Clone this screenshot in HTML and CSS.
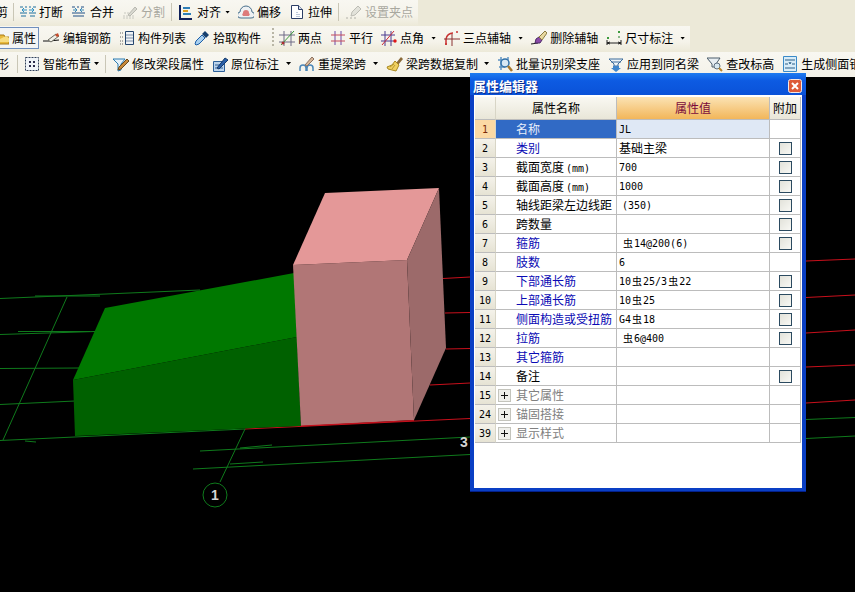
FILE: index.html
```html
<!DOCTYPE html>
<html lang="zh">
<head>
<meta charset="utf-8">
<title>属性编辑器</title>
<link rel="stylesheet" href="styles.css">
</head>
<body>
<div class="app">
<header class="toolbars">
  <div class="bar bar1">
    <span class="lead lead1">剪</span><i class="sep"></i>
    <div class="tool"><svg width="16" height="16" viewBox="0 0 16 16"><path d="M0 3h3M5 3h2M9 3h2M13 3h3M0 9h7M9 9h7M1 12h5M10 12h5" stroke="#1d6f9e" fill="none"/><path d="M7 6H2l2-2M2 6l2 2M9 6h5l-2-2M14 6l-2 2" stroke="#2a8fc4" fill="none"/></svg><span>打断</span></div>
    <div class="tool"><svg width="16" height="16" viewBox="0 0 16 16"><path d="M1 3h3M6 3h2M10 3h3M1 9h13M2 12h11" stroke="#1f4f86" fill="none"/><path d="M2 6h4l-2-2M6 6l-2 2M13 6H9l2-2M9 6l2 2" stroke="#3a8ab8" fill="none"/></svg><span>合并</span></div>
    <div class="tool off"><svg width="16" height="16" viewBox="0 0 16 16"><path d="M1 12h12M1 14h12M2 9h8" stroke="#c8c8c0" stroke-dasharray="2 1" fill="none"/><path d="M6 11l7-8 2 2-7 7z" fill="#d8d8d0" stroke="#b8b8b0"/></svg><span>分割</span></div>
    <i class="sep"></i>
    <div class="tool"><svg width="16" height="16" viewBox="0 0 16 16"><path d="M2 1v14h12" stroke="#10205a" stroke-width="2" fill="none"/><path d="M5 4h7M5 10h8" stroke="#2f7fb8" stroke-width="2" fill="none"/><path d="M5 7h5" stroke="#e0a020" stroke-width="2"/></svg><span>对齐</span><b class="arrow near"></b></div>
    <div class="tool"><svg width="16" height="16" viewBox="0 0 16 16"><path d="M3 14a3 3 0 0 1-1-6 6 6 0 0 1 12 0 3 3 0 0 1-1 6z" fill="#eef1f3" stroke="#48708c"/><path d="M5 12a2 2 0 0 1 0-3 3 3 0 0 1 6 0 2 2 0 0 1 0 3z" fill="#dd7a7a"/></svg><span>偏移</span></div>
    <div class="tool"><svg width="16" height="16" viewBox="0 0 16 16"><path d="M2.500 1.500h7l4 4v9h-11z" fill="#fff" stroke="#2c3e66"/><path d="M9.500 1.500v4h4" fill="#d8e0ee" stroke="#2c3e66"/><path d="M8 8v5M10 10v3" stroke="#7c93b4" stroke-dasharray="1 1"/></svg><span>拉伸</span></div>
    <i class="sep"></i>
    <div class="tool off"><svg width="17" height="16" viewBox="0 0 17 16"><path d="M1 14h2M5 14h2M9 14h2" stroke="#b0b0a8"/><path d="M6 12l1-4 6-6 3 3-6 6z" fill="#e2e2da" stroke="#bcbcb4"/></svg><span>设置夹点</span></div>
  </div>

  <div class="bar bar2">
    <div class="tool active"><svg width="9" height="16" viewBox="0 0 9 16"><path d="M-6 5h10l1 2h4v7H-6z" fill="#e8b93c" stroke="#a87a18"/><path d="M0 9l6-3 3 2v4H0z" fill="#f6dc82"/></svg><span>属性</span></div>
    <div class="tool pull"><svg width="17" height="16" viewBox="0 0 17 16"><path d="M0 11h6l10-1" stroke="#111" fill="none"/><path d="M5 10l8-6 3 2-8 6z" fill="#f0f0e8" stroke="#6a6a60"/><path d="M12 5l3-2 1 3-2 1z" fill="#c84a2a"/></svg><span>编辑钢筋</span></div>
    <div class="tool"><svg width="16" height="16" viewBox="0 0 16 16"><path d="M1 3h3M1 7h3M1 11h3M1 14h3" stroke="#666" stroke-dasharray="1 1"/><path d="M6.500 1.500h8v13h-8z" fill="#eef2f6" stroke="#24456e"/><path d="M7 5h7M7 8h7M7 11h7" stroke="#7b8da6"/></svg><span>构件列表</span></div>
    <div class="tool"><svg width="16" height="16" viewBox="0 0 16 16"><path d="M2 15l-1-1 1-3 6-6 3 3-6 6z" fill="#a9d0ef" stroke="#1d5fa8"/><path d="M8 4l3-3 4 4-3 3z" fill="#16406f"/></svg><span>拾取构件</span></div>
    <i class="grip"></i>
    <div class="tool"><svg width="16" height="16" viewBox="0 0 16 16"><path d="M5 1v15M12 1v15M0 5h16M0 12h16" stroke="#6e6a86" fill="none"/><path d="M2 15L15 1" stroke="#3d9a3d" fill="none"/><circle cx="4" cy="13" r="1.500" fill="#a83030"/></svg><span>两点</span></div>
    <div class="tool"><svg width="16" height="16" viewBox="0 0 16 16"><path d="M5 1v14M11 1v14" stroke="#6c4aa8" fill="none"/><path d="M1 5h14M1 11h14" stroke="#c64a5a" fill="none"/></svg><span>平行</span></div>
    <div class="tool"><svg width="16" height="16" viewBox="0 0 16 16"><path d="M4 1v15M10 1v15M0 5h14M0 11h14" stroke="#4a3a90" fill="none"/><path d="M1 15L13 1" stroke="#cc2a3a" fill="none"/><circle cx="14" cy="11" r="1.700" fill="#e01818"/></svg><span>点角</span><b class="arrow"></b></div>
    <div class="tool"><svg width="16" height="16" viewBox="0 0 16 16"><path d="M2 15V9a7 7 0 0 1 7-6" stroke="#c83030" stroke-width="1.500" fill="none"/><path d="M0 9h16M8 4v12" stroke="#8a3030" fill="none"/><circle cx="2" cy="14" r="1" fill="#c83030"/><circle cx="13" cy="2" r="1" fill="#c83030"/></svg><span>三点辅轴</span><b class="arrow"></b></div>
    <div class="tool"><svg width="16" height="16" viewBox="0 0 16 16"><path d="M0 14l7-1" stroke="#222"/><path d="M4 13l1-4 3-2 3 3-2 3z" fill="#8a4aa8" stroke="#4d2a66"/><path d="M8 7l6-6 2 2-5 7z" fill="#e8d8a0" stroke="#8a7a40"/></svg><span>删除辅轴</span></div>
    <div class="tool"><svg width="16" height="16" viewBox="0 0 16 16"><path d="M1 10v5M15 10v5M1 13h14M1 13l3-1M1 13l3 1M15 13l-3-1M15 13l-3 1" stroke="#222" fill="none"/><rect x="1" y="7" width="2" height="2" fill="#3d9a3d"/><rect x="12" y="1" width="2" height="2" fill="#3d9a3d"/><rect x="12" y="6" width="2" height="2" fill="#8ab88a"/></svg><span>尺寸标注</span><b class="arrow"></b></div>
  </div>

  <div class="bar bar3">
    <span class="lead lead3">形</span><i class="sep"></i>
    <div class="tool"><svg width="16" height="16" viewBox="0 0 16 16"><path d="M1.500 1.500h13v13h-13z" fill="#f0f4f8" stroke="#30405a" stroke-dasharray="2 1"/><path d="M5 5h2v2H5zM9 5h2v2H9zM5 9h2v2H5zM9 9h2v2H9z" fill="#2a2a4a"/></svg><span>智能布置</span><b class="arrow near"></b></div>
    <i class="sep"></i>
    <div class="tool"><svg width="17" height="16" viewBox="0 0 17 16"><path d="M1 3h12L9 8v6l-3 1V8z" fill="#e6f2fa" stroke="#2a7ab0"/><path d="M7 11l8-8 2 2-8 8-3 1z" fill="#c88a3a" stroke="#6a4a20"/></svg><span>修改梁段属性</span></div>
    <div class="tool"><svg width="16" height="16" viewBox="0 0 16 16"><path d="M1.500 5.500h11v10h-11z" fill="#bcd4ec" stroke="#2c5f98"/><path d="M3 9h5M3 12h8" stroke="#2c5f98"/><path d="M5 12l8-10 3 2-9 9z" fill="#2a5fa8" stroke="#163a6a"/></svg><span>原位标注</span><b class="arrow"></b></div>
    <div class="tool"><svg width="16" height="16" viewBox="0 0 16 16"><path d="M1 15v-3a3 3 0 0 1 6 0v3M8 15v-3a3 3 0 0 1 6 0v3" stroke="#4a86b8" stroke-width="1.500" fill="none"/><path d="M6 9l7-8 2 2-7 7z" fill="#d8b89a" stroke="#8a7060"/></svg><span>重提梁跨</span><b class="arrow"></b></div>
    <div class="tool"><svg width="17" height="16" viewBox="0 0 17 16"><path d="M10 7l5-6 2 2-5 6z" fill="#8a6a3a"/><path d="M9 5l4 4-3 6-8-2-1-2 5-2z" fill="#f0d060" stroke="#a88820"/><path d="M4 11l4-3M6 13l3-4" stroke="#b89a30"/></svg><span>梁跨数据复制</span><b class="arrow a6"></b></div>
    <div class="tool"><svg width="16" height="16" viewBox="0 0 16 16"><path d="M1 4h7M2 11h6M4 1v13M11 1v6" stroke="#5d93c4" stroke-width="1.500" fill="none"/><circle cx="8" cy="7" r="4" fill="#d8e8f4" stroke="#2f6fa8" stroke-width="1.500"/><path d="M11 10l4 5" stroke="#a8782c" stroke-width="2.500"/></svg><span>批量识别梁支座</span></div>
    <div class="tool"><svg width="16" height="16" viewBox="0 0 16 16"><path d="M1 3h14l-5 5v2H6V8z" fill="#eef4f8" stroke="#3a6a9a"/><path d="M3 6h10" stroke="#3a6a9a"/><path d="M5 10h6v2h2l-5 4-5-4h2z" fill="#3f86cc"/></svg><span>应用到同名梁</span></div>
    <div class="tool"><svg width="16" height="16" viewBox="0 0 16 16"><path d="M0 2h13l-4 6v3H5V8z" fill="#e8eef2" stroke="#4a5c6a"/><circle cx="10" cy="10" r="3" fill="#d8e8f0" stroke="#607080"/><path d="M12 12l3 3" stroke="#b8862c" stroke-width="2"/></svg><span>查改标高</span></div>
    <div class="tool"><svg width="16" height="16" viewBox="0 0 16 16"><path d="M1.500 .5h13v15h-13z" fill="#d8ecf8" stroke="#3a8ac8"/><path d="M3 4h10M3 12h10" stroke="#2a5f88"/><path d="M3 8h3M10 8h3M7 6l1 2 1-2" stroke="#2a5f88" fill="none"/></svg><span>生成侧面钢筋</span></div>
  </div>
</header>

<main class="canvas">
  <svg class="scene" width="855" height="515" viewBox="0 77 855 515">
    <g class="grid-green">
      <path d="M0 298.500L200 290M35 296H100M0 334.500L95 331.500M18 331.500H90M0 368.500L80 368M0 404.500L75 401M0 440.500L245 429M3 440L67 297M25 441l11 1"/>
      <path d="M200 451L470 437M240 448l32-3M806 419.500L855 417.500M193 469L470 454.500M230 464l33-2M806 438.500L855 436"/>
      <path d="M245 429L220 482"/>
      <circle cx="215" cy="495" r="12"/>
    </g>
    <g class="grid-red">
      <path d="M443 278.500L470 277M806 261L855 259M445 313L470 312.500M806 297.500L855 295M446 349L470 348.500M806 333L855 330M430 385L470 383M806 367L855 365M245 429L470 418.500M806 403L855 400"/>
    </g>
    <path class="beam-top" d="M73 380L105 308L294 273L297 337Z"/>
    <path class="beam-front" d="M73 380L297 337L301 426L75 436Z"/>
    <path class="col-front" d="M293 265L407 260L414 420L301 426Z"/>
    <path class="col-top" d="M293 265L325 193L439 188L407 260Z"/>
    <path class="col-side" d="M407 260L439 188L446 348L414 420Z"/>
    <path class="grid-red" d="M301 426L414 420.500"/>
    <text class="label" x="215" y="500">1</text>
    <text class="label" x="464" y="447">3</text>
  </svg>

  <section class="dialog">
    <div class="dialog-title"><span>属性编辑器</span>
      <svg class="close" width="14" height="14" viewBox="0 0 14 14"><rect x=".5" y=".5" width="13" height="13" rx="2" fill="#dd5a38" stroke="#f4e8e4"/><path d="M4 4l6 6M10 4l-6 6" stroke="#fff" stroke-width="2"/></svg>
    </div>
    <div class="client">
      <div class="row head"><div class="num"></div><div class="name">属性名称</div><div class="val">属性值</div><div class="add">附加</div></div>
      <div class="row sel"><div class="num">1</div><div class="name">名称</div><div class="val">JL</div><div class="add"></div></div>
      <div class="row"><div class="num">2</div><div class="name pub">类别</div><div class="val cjk">基础主梁</div><div class="add"><i class="chk"></i></div></div>
      <div class="row"><div class="num">3</div><div class="name">截面宽度<span class="unit">(mm)</span></div><div class="val">700</div><div class="add"><i class="chk"></i></div></div>
      <div class="row"><div class="num">4</div><div class="name">截面高度<span class="unit">(mm)</span></div><div class="val">1000</div><div class="add"><i class="chk"></i></div></div>
      <div class="row"><div class="num">5</div><div class="name">轴线距梁左边线距</div><div class="val ind">(350)</div><div class="add"><i class="chk"></i></div></div>
      <div class="row"><div class="num">6</div><div class="name">跨数量</div><div class="val"></div><div class="add"><i class="chk"></i></div></div>
      <div class="row"><div class="num">7</div><div class="name pub">箍筋</div><div class="val ind"><span class="rb">虫</span>14@200(6)</div><div class="add"><i class="chk"></i></div></div>
      <div class="row"><div class="num">8</div><div class="name pub">肢数</div><div class="val">6</div><div class="add"></div></div>
      <div class="row"><div class="num">9</div><div class="name pub">下部通长筋</div><div class="val">10<span class="rb">虫</span>25/3<span class="rb">虫</span>22</div><div class="add"><i class="chk"></i></div></div>
      <div class="row"><div class="num">10</div><div class="name pub">上部通长筋</div><div class="val">10<span class="rb">虫</span>25</div><div class="add"><i class="chk"></i></div></div>
      <div class="row"><div class="num">11</div><div class="name pub">侧面构造或受扭筋</div><div class="val">G4<span class="rb">虫</span>18</div><div class="add"><i class="chk"></i></div></div>
      <div class="row"><div class="num">12</div><div class="name pub">拉筋</div><div class="val ind"><span class="rb">虫</span>6@400</div><div class="add"><i class="chk"></i></div></div>
      <div class="row"><div class="num">13</div><div class="name pub">其它箍筋</div><div class="val"></div><div class="add"></div></div>
      <div class="row"><div class="num">14</div><div class="name">备注</div><div class="val"></div><div class="add"><i class="chk"></i></div></div>
      <div class="row group"><div class="num">15</div><div class="name"><i class="plus"></i>其它属性</div><div class="val"></div><div class="add"></div></div>
      <div class="row group"><div class="num">24</div><div class="name"><i class="plus"></i>锚固搭接</div><div class="val"></div><div class="add"></div></div>
      <div class="row group"><div class="num">39</div><div class="name"><i class="plus"></i>显示样式</div><div class="val"></div><div class="add"></div></div>
    </div>
  </section>
</main>
</div>
</body>
</html>
```
FILE: styles.css
```css
* { box-sizing: border-box; }
html, body { margin: 0; padding: 0; }
body {
  width: 855px;
  height: 592px;
  overflow: hidden;
  background: #ece9d8;
  font: 12px/16px "Noto Sans CJK SC", "Liberation Sans", sans-serif;
  color: #000;
}
.app { display: flex; flex-direction: column; height: 592px; }

/* toolbars */
.toolbars { display: flex; flex-direction: column; flex: none; height: 77px; background: #ece9d8; }
.bar {
  display: flex;
  align-items: center;
  gap: 8px;
  white-space: nowrap;
  background: linear-gradient(#f8f7f1, #f5f3ea 60%, #ece9d8);
}
.bar1 { height: 26px; width: 418px; padding-bottom: 2px; }
.bar2 { height: 26px; width: 690px; padding-bottom: 2px; }
.bar3 { height: 25px; width: 855px; padding-bottom: 2px; overflow: hidden; background: linear-gradient(#f8f7f1, #f4f2e9); }
.lead { flex: none; }
.lead1 { margin: 0 -1px 0 -4px; }
.lead3 { margin: 0 2px 0 -3px; }
.tool { display: flex; align-items: center; gap: 3px; flex: none; }
.tool svg { flex: none; display: block; }
.tool.off { color: #a9a89f; }
.tool.pull { margin-left: -4px; }
.tool.active {
  height: 22px;
  margin-left: -1px;
  padding-right: 2px;
  border: 1px solid #6f8fbe;
  background: #f3f4f4;
  overflow: hidden;
}
.sep { flex: none; width: 1px; height: 18px; margin: 0 -2px; background: #c9c6b6; }
.grip {
  flex: none;
  width: 2px;
  height: 20px;
  margin: 0 -3px 0 3px;
  background: repeating-linear-gradient(#b9b6a6 0 2px, transparent 2px 4px);
}
.arrow {
  flex: none;
  display: block;
  width: 5px;
  height: 3px;
  margin-left: 4px;
  background: #000;
  clip-path: polygon(0 0, 100% 0, 50% 100%);
}
.arrow.near { margin-left: 1px; }
.bar3 .arrow.near { margin-left: 0; }
.arrow.a6 { margin-left: 3px; }

/* drawing area */
.canvas { position: relative; flex: 1; background: #000; }
.scene { display: block; }
.grid-green { fill: none; stroke: #0f7a1c; stroke-width: 1; }
.grid-red { fill: none; stroke: #c8101c; stroke-width: 1; }
.beam-top { fill: #007800; }
.beam-front { fill: #006100; }
.col-top { fill: #e49898; }
.col-front { fill: #b17676; }
.col-side { fill: #9c6a6a; }
.label { fill: #d4d4d4; font: bold 14px "Liberation Sans", sans-serif; text-anchor: middle; }

/* property dialog */
.dialog {
  position: absolute;
  left: 470px;
  top: -4px;
  width: 336px;
  height: 419px;
  display: flex;
  flex-direction: column;
  background: #0a3fc4;
  border-bottom: 1px solid #04208a;
}
.dialog-title {
  flex: none;
  height: 22px;
  padding: 4px 4px 0 3px;
  display: flex;
  justify-content: space-between;
  align-items: center;
  background: linear-gradient(#1f7cf0, #0d5be2 35%, #0a52d8);
  color: #fff;
  font-weight: 700;
  font-size: 13px;
  text-shadow: 1px 1px 0 #0a2a8a;
}
.close { display: block; }
.client {
  flex: 1;
  margin: 0 4px 3px;
  padding: 2px 1px 0;
  background: #fff;
}
.row {
  display: grid;
  grid-template-columns: 21px 121px 153px 31px;
  height: 19px;
  line-height: 18px;
}
.row > div {
  border-right: 1px solid #bcbcbc;
  border-bottom: 1px solid #bcbcbc;
  white-space: nowrap;
  overflow: hidden;
}
.num {
  text-align: center;
  font: 10px/20px "DejaVu Sans Mono", monospace;
  background: linear-gradient(#f4f2ea, #e6e3d4);
  border-right-color: #d8d5c6 !important;
}
.name { padding-left: 20px; }
.name.pub { color: #0a0ab4; }
.val { padding-left: 2px; font: 10px/20px "DejaVu Sans Mono", "Noto Sans CJK SC", monospace; }
.val.ind { padding-left: 5px; }
.val.cjk { font: 12px/18px "Noto Sans CJK SC", sans-serif; }
.unit { margin-left: 2px; font: 10px "DejaVu Sans Mono", monospace; }
.rb { margin: 0 1px; font: 10px/18px "Noto Sans CJK SC", sans-serif; }
.add { display: flex; justify-content: center; align-items: center; }
.chk {
  display: block;
  width: 13px;
  height: 13px;
  border: 1px solid #2b4a60;
  background: linear-gradient(135deg, #e2e2da, #f8f8f4);
}

.head { height: 23px; line-height: 22px; }
.head > div { background: linear-gradient(#f9f8f2, #e9e6d8); text-align: center; padding: 0; }
.head .val { background: linear-gradient(#fbe3b4, #f2b65a); color: #7a0a3c; font: 12px/22px "Noto Sans CJK SC", sans-serif; }
.sel .num { background: #fbd9a4; color: #7a2a0a; }
.sel .name { background: #316ac5; color: #e8eefa; }
.sel .val { background: #dfe8f5; }
.group .name { display: flex; align-items: center; padding-left: 2px; color: #808080; }
.plus {
  flex: none;
  width: 13px;
  height: 13px;
  margin-right: 5px;
  border: 1px solid #c4c4bc;
  background:
    linear-gradient(#111, #111) center / 7px 1px no-repeat,
    linear-gradient(#111, #111) center / 1px 7px no-repeat,
    #f0f0ec;
}
```
